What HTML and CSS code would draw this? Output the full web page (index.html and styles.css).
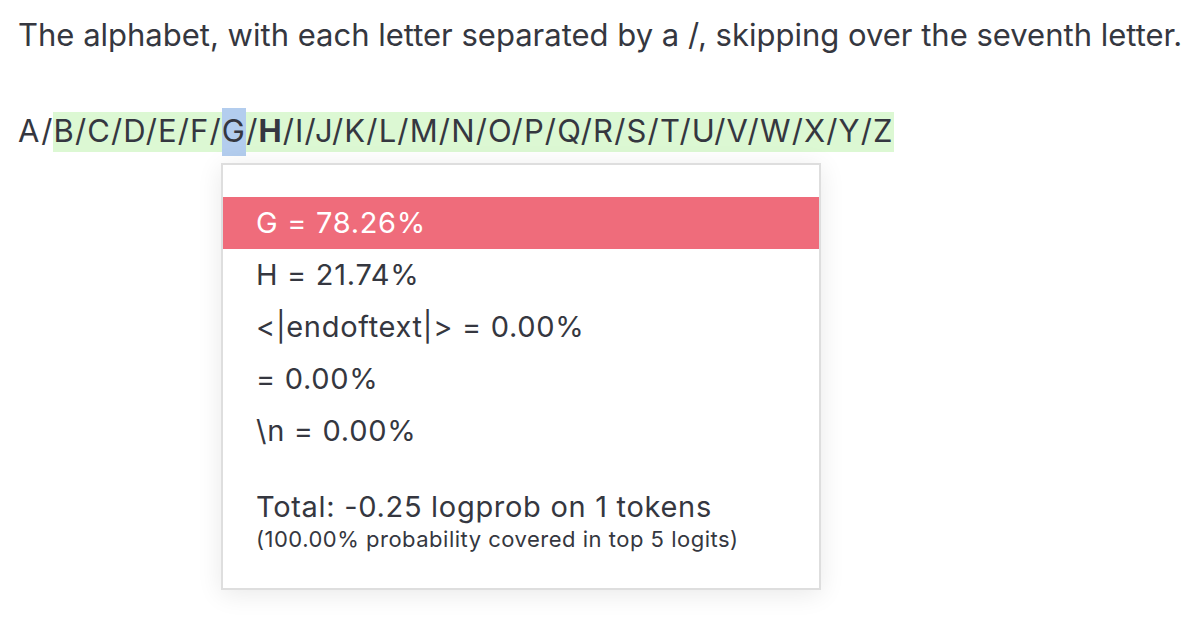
FILE: index.html
```html
<!DOCTYPE html>
<html>
<head>
<meta charset="utf-8">
<link rel="stylesheet" href="styles.css">
</head>
<body>
<div class="page">
  <p class="prompt">The alphabet, with each letter separated by a /, skipping over the seventh letter.</p>
  <p class="completion">A/<span class="hl">B/C/D/E/F/<span class="tok">G</span>/<b>H</b>/I/J/K/L/M/N/O/P/Q/R/S/T/U/V/W/X/Y/Z</span></p>
  <div class="pop">
    <div class="row active">G = 78.26%</div>
    <div class="row">H = 21.74%</div>
    <div class="row">&lt;|endoftext|&gt; = 0.00%</div>
    <div class="row">= 0.00%</div>
    <div class="row">\n = 0.00%</div>
    <div class="total">Total: -0.25 logprob on 1 tokens</div>
    <div class="cover">(100.00% probability covered in top 5 logits)</div>
  </div>
</div>
</body>
</html>
```
FILE: styles.css
```css
html, body {
  margin: 0;
  padding: 0;
  background: #ffffff;
}
.page {
  position: relative;
  height: 628px;
  font-family: Inter, "Noto Sans", sans-serif;
  color: #353740;
  font-size: 31px;
  padding: 0 0 0 18px;
  box-sizing: border-box;
}
.prompt {
  margin: 0;
  padding-top: 17px;
  line-height: 36px;
}
.completion {
  margin: 0;
  padding-top: 60px;
  line-height: 36px;
  letter-spacing: 1.15px;
}
.hl {
  background: #dcf8d3;
  padding: 0 0 3px 0;
}
.tok {
  background: #b3cdee;
  padding: 4px 0 7px 0;
}
b {
  font-weight: 700;
}
.pop {
  position: absolute;
  left: 221px;
  top: 163px;
  width: 600px;
  height: 427px;
  box-sizing: border-box;
  background: #fff;
  border: 2px solid #dedede;
  box-shadow: 0 4px 24px rgba(0, 0, 0, 0.09);
  padding-top: 32px;
  color: #353740;
}
.row {
  height: 52px;
  line-height: 52px;
  padding-left: 33px;
  font-size: 29px;
  letter-spacing: 0.7px;
  white-space: nowrap;
}
.row.active {
  background: #ef6c7b;
  color: #ffffff;
}
.total {
  padding-left: 33px;
  margin-top: 32px;
  font-size: 29px;
  letter-spacing: 0.7px;
  line-height: 36px;
}
.cover {
  padding-left: 33px;
  font-size: 22px;
  letter-spacing: 0.5px;
  line-height: 28px;
}
```
